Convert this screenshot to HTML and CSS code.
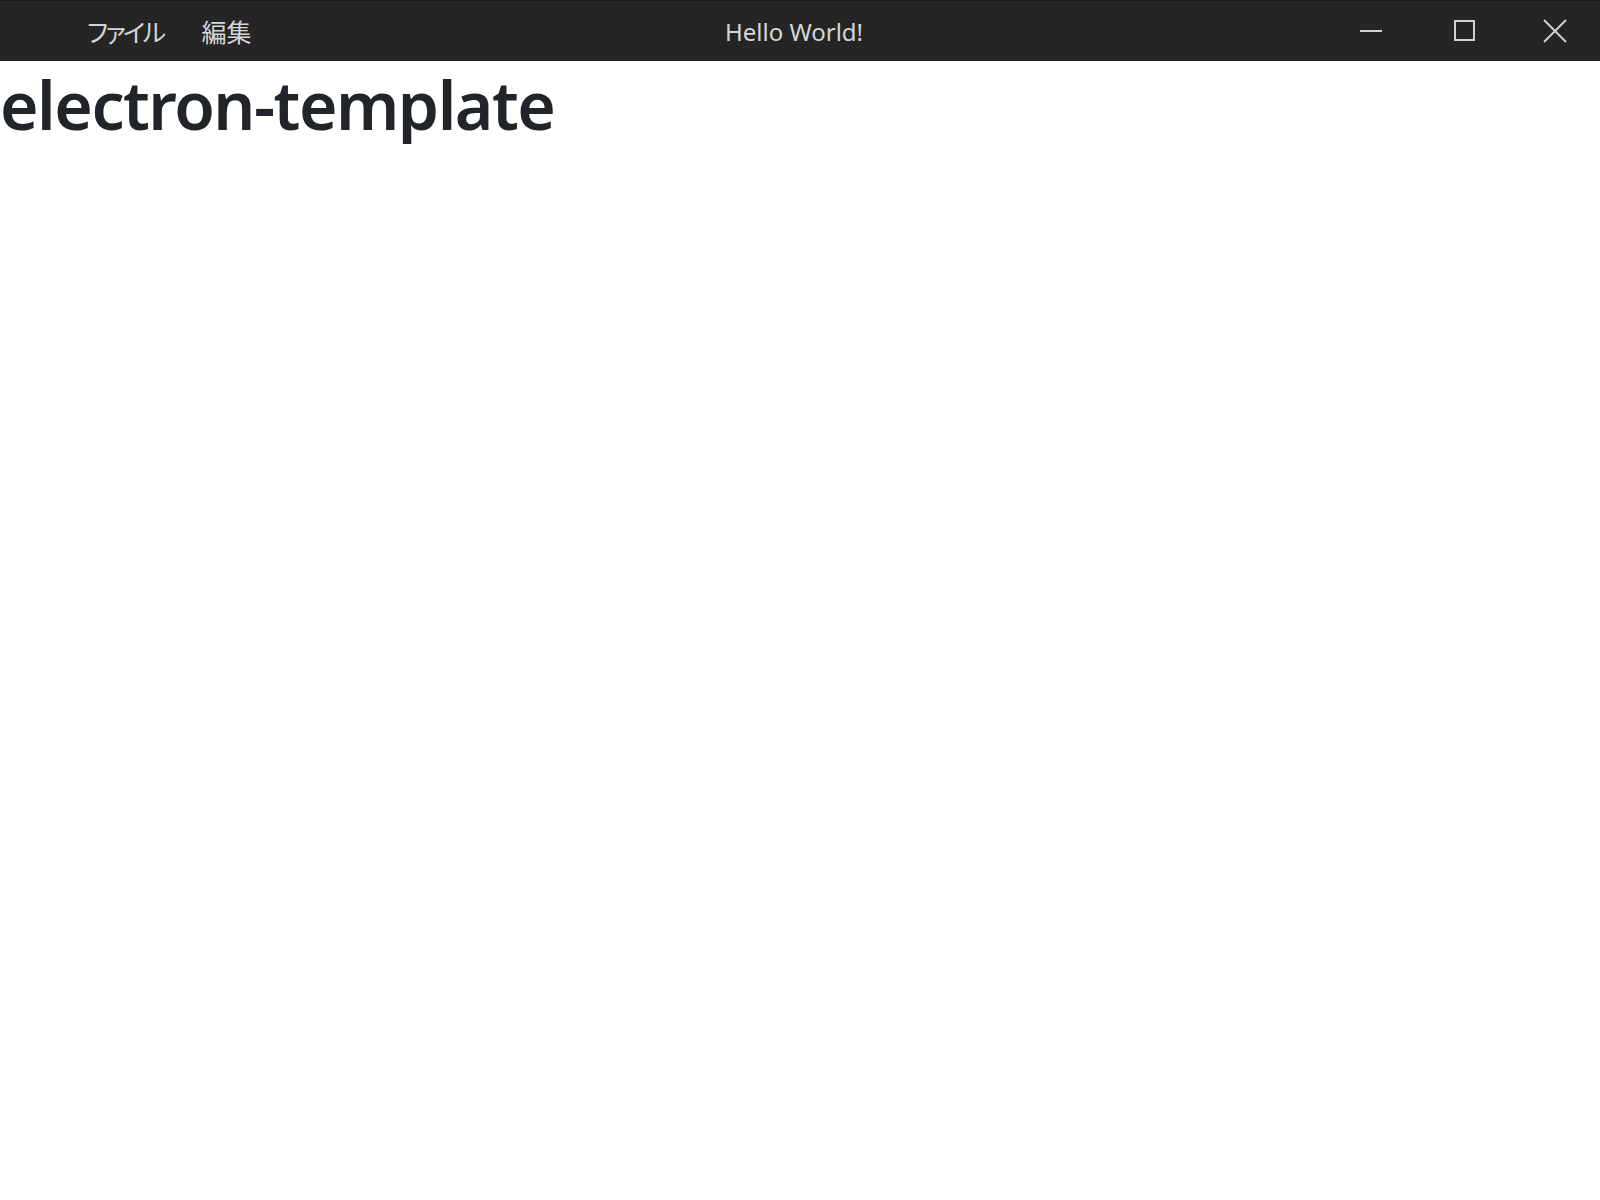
FILE: index.html
```html
<!DOCTYPE html>
<html lang="ja">
<head>
<meta charset="utf-8">
<title>Hello World!</title>
<link rel="stylesheet" href="styles.css">
</head>
<body>
<header class="titlebar">
  <nav class="menu">
    <span class="menu-item menu-kana">ファイル</span>
    <span class="menu-item">編集</span>
  </nav>
  <div class="title">Hello World!</div>
  <div class="controls">
    <button class="ctrl ctrl-min" aria-label="minimize">
      <svg width="24" height="24" viewBox="0 0 24 24"><path d="M1 12H23" stroke="#d0d0d0" stroke-width="2" fill="none"/></svg>
    </button>
    <button class="ctrl" aria-label="maximize">
      <svg width="24" height="24" viewBox="0 0 24 24"><rect x="2" y="2" width="19" height="19" stroke="#d0d0d0" stroke-width="2" fill="none"/></svg>
    </button>
    <button class="ctrl" aria-label="close">
      <svg width="24" height="24" viewBox="0 0 24 24"><path d="M1 1L23 23M23 1L1 23" stroke="#d0d0d0" stroke-width="2" fill="none"/></svg>
    </button>
  </div>
</header>
<main class="content">
  <h1 class="heading">electron-template</h1>
</main>
</body>
</html>
```
FILE: styles.css
```css
html, body {
  margin: 0;
  padding: 0;
  background: #ffffff;
}
.titlebar {
  display: flex;
  align-items: center;
  height: 60px;
  background: #252525;
  border-top: 1px solid #1b1b1b;
  color: #d6d6d6;
  font-family: "Noto Sans CJK JP", "Noto Sans", sans-serif;
  position: relative;
}
.menu {
  display: flex;
  gap: 38px;
  padding-left: 87px;
  font-size: 25px;
  font-weight: 400;
  font-feature-settings: "palt";
}
.menu-kana {
  letter-spacing: -2.5px;
}
.title {
  position: absolute;
  left: 0;
  right: 0;
  text-align: center;
  font-family: "Noto Sans", sans-serif;
  font-size: 24px;
  pointer-events: none;
  padding-right: 12px;
}
.controls {
  margin-left: auto;
  display: flex;
}
.ctrl {
  width: 90px;
  height: 60px;
  background: none;
  border: 0;
  padding: 0;
  display: flex;
  align-items: center;
  justify-content: center;
}
.ctrl-min {
  padding-right: 8px;
}
.content {
  padding: 0;
}
.heading {
  margin: 0;
  padding-top: 4px;
  font-family: "Noto Sans", sans-serif;
  font-weight: 600;
  font-size: 66px;
  letter-spacing: -1.5px;
  color: #212529;
  line-height: 1.2;
}
```
